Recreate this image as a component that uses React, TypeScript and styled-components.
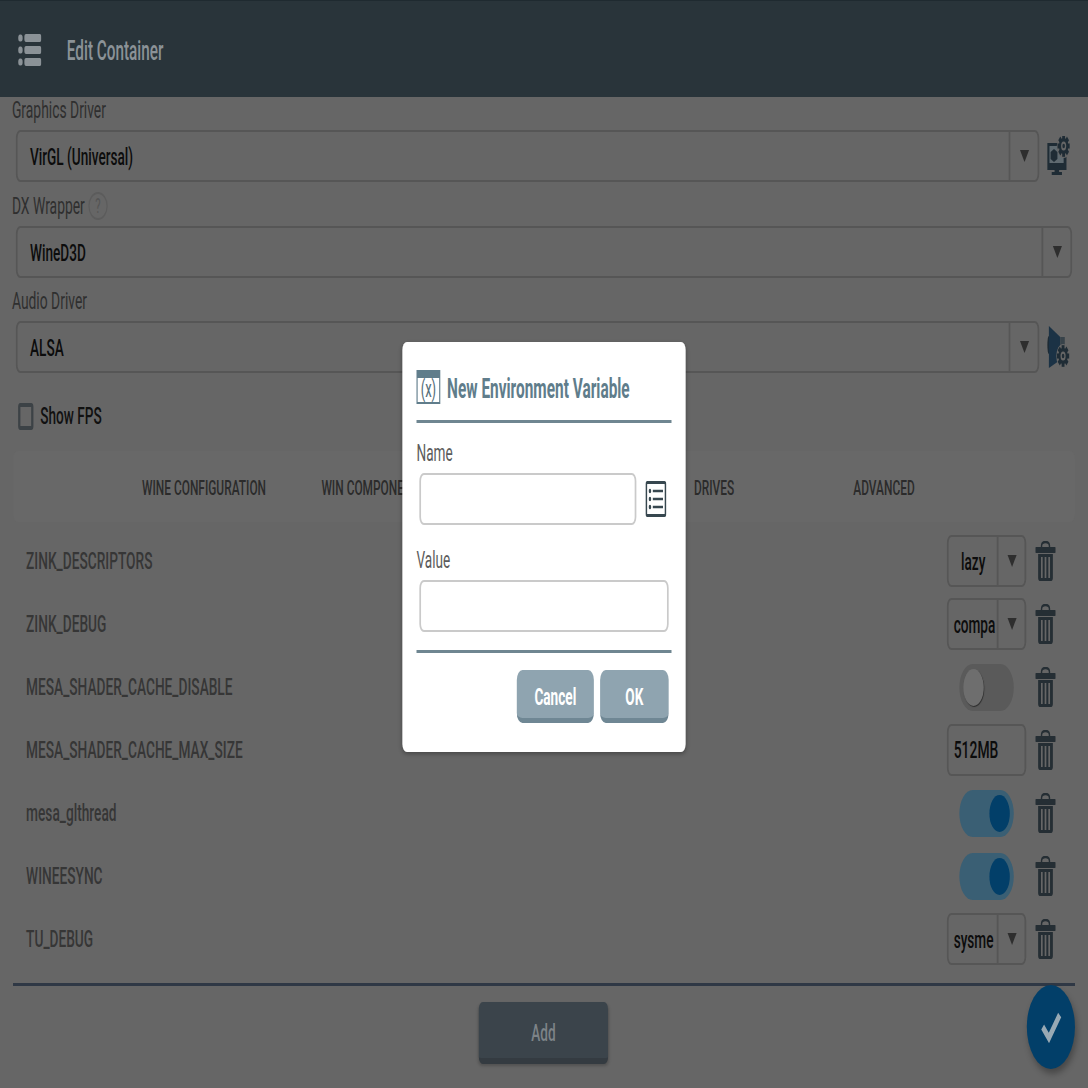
import React from "react";
import styled, { createGlobalStyle } from "styled-components";

const Global = createGlobalStyle`
  html, body { margin: 0; padding: 0; background: #666666; overflow: hidden; }
  #root { width: 1088px; height: 1088px; overflow: hidden; }
  * { box-sizing: border-box; }
`;

/* The reference is a 1920 wide tablet screen squeezed horizontally into 1088px. */
const Screen = styled.div`
  position: relative;
  width: 1920px;
  height: 1088px;
  transform: scaleX(0.56667);
  transform-origin: 0 0;
  background: #666666;
  font-family: Roboto, "Liberation Sans", sans-serif;
  overflow: hidden;
`;

const Header = styled.header`
  height: 97px;
  background: #29343a;
  border-top: 1px solid #1f2a30;
  display: flex;
  align-items: center;
  gap: 45px;
  padding: 1px 0 0 32px;
`;

const HeaderTitle = styled.h1`
  margin: 2px 0 0;
  font-size: 27px;
  font-weight: 500;
  color: #8b9297;
`;

const Form = styled.main`
  padding: 0 23px 0 21px;
  display: flex;
  flex-direction: column;
`;

const Field = styled.section`
  height: 95.5px;
`;

const FieldLabel = styled.div`
  height: 26px;
  line-height: 26px;
  margin-bottom: 7px;
  font-size: 24.5px;
  color: #2f2f2f;
  display: flex;
  align-items: center;
  gap: 6px;
`;

const HelpMark = styled.span`
  width: 34px;
  height: 28px;
  border: 2px solid #5c5c5c;
  border-radius: 50%;
  color: #545454;
  font-size: 20px;
  display: flex;
  align-items: center;
  justify-content: center;
`;

const SelectRow = styled.div`
  display: flex;
  align-items: center;
  gap: 14px;
  padding-right: 9px;
`;

const Select = styled.div<{ $full?: boolean }>`
  flex: 1;
  height: 52px;
  margin-left: 7px;
  margin-right: ${(p) => (p.$full ? "-4px" : "0")};
  border-style: solid;
  border-color: #565656;
  border-width: 2px 3px;
  border-radius: 8px;
  display: flex;
  align-items: stretch;
  font-size: 24px;
  font-weight: 500;
  color: #0c0c0c;
`;

const SelectValue = styled.div`
  flex: 1;
  min-width: 0;
  padding-left: 22px;
  line-height: 50px;
`;

const SelectArrow = styled.div<{ $w: number }>`
  width: ${(p) => p.$w}px;
  border-left: 3px solid #565656;
  display: flex;
  align-items: center;
  justify-content: center;
  flex: none;
`;

const Triangle = styled.span`
  width: 0;
  height: 0;
  margin-left: 2px;
  border-left: 8px solid transparent;
  border-right: 8px solid transparent;
  border-top: 12px solid #2e2e2e;
`;

const CheckRow = styled.label`
  margin-top: 18.5px;
  margin-left: 11px;
  height: 28px;
  display: flex;
  align-items: center;
  gap: 12px;
  font-size: 24px;
  font-weight: 500;
  color: #111;
`;

const CheckBox = styled.span`
  width: 27px;
  height: 27px;
  border: 4px solid #3c4246;
  border-radius: 4px;
`;

const Tabs = styled.nav`
  margin: 21px 0 0 2px;
  height: 71px;
  background: #686868;
  border-radius: 8px;
  display: flex;
  justify-content: center;
  align-items: center;
`;

const Tab = styled.div`
  width: 300px;
  padding-top: 2px;
  text-align: center;
  font-size: 21px;
  font-weight: 500;
  color: #2b2b2b;
  white-space: nowrap;
`;

const Rows = styled.div`
  margin-top: 7.5px;
`;

const Row = styled.div`
  height: 63px;
  display: flex;
  align-items: center;
  padding: 0 34px 0 25px;
`;

const RowName = styled.div`
  flex: 1;
  font-size: 24.2px;
  font-weight: 500;
  color: #363636;
`;

const ControlSlot = styled.div`
  width: 140px;
  display: flex;
  justify-content: center;
  margin-right: 16px;
`;

const SmallSelect = styled.div`
  width: 140px;
  height: 52px;
  border-style: solid;
  border-color: #565656;
  border-width: 2px 3px;
  border-radius: 8px;
  display: flex;
  align-items: stretch;
  font-size: 24px;
  font-weight: 500;
  color: #0c0c0c;
`;

const SmallValue = styled.div<{ $inset: number }>`
  flex: 1;
  min-width: 0;
  white-space: nowrap;
  padding-left: ${(p) => p.$inset}px;
  line-height: 50px;
`;

const TextBox = styled.div`
  width: 140px;
  height: 52px;
  border-style: solid;
  border-color: #565656;
  border-width: 2px 3px;
  border-radius: 8px;
  padding-left: 9px;
  line-height: 48px;
  font-size: 24.5px;
  font-weight: 500;
  color: #0c0c0c;
`;

const Track = styled.div<{ $on?: boolean }>`
  width: 96px;
  height: 47px;
  border-radius: 24px;
  padding: 5px 7px;
  background: ${(p) => (p.$on ? "#3a5f74" : "#5a5a5a")};
  display: flex;
  justify-content: ${(p) => (p.$on ? "flex-end" : "flex-start")};
`;

const Knob = styled.div<{ $on?: boolean }>`
  width: 36px;
  height: 37px;
  border-radius: 50%;
  background: ${(p) => (p.$on ? "#023f69" : "#6e6e6e")};
  box-shadow: ${(p) => (p.$on ? "none" : "1px 1px 1px #2e2e2e")};
`;

const Rule = styled.hr`
  margin: 12px 0 0 2px;
  border: none;
  height: 3px;
  background: #2f3845;
`;

const AddWrap = styled.div`
  margin-top: 16px;
  display: flex;
  justify-content: center;
`;

const AddButton = styled.button`
  width: 228px;
  height: 62px;
  background: #3b444b;
  border: none;
  border-bottom: 6px solid #343b41;
  border-radius: 7px;
  font: 500 24px Roboto, sans-serif;
  color: #7d8388;
  padding: 7px 0 0;
  box-shadow: 0 2px 4px rgba(0, 0, 0, 0.2);
`;

const Fab = styled.button`
  position: absolute;
  left: 1812px;
  top: 985px;
  width: 85px;
  height: 84px;
  border: none;
  border-radius: 50%;
  background: #023f69;
  box-shadow: 3px 5px 8px rgba(0, 0, 0, 0.3);
  display: flex;
  align-items: center;
  justify-content: center;
  padding: 0;
`;

const Backdrop = styled.div`
  position: absolute;
  inset: 0;
  display: flex;
  align-items: center;
  justify-content: center;
  padding-top: 6px;
`;

const Dialog = styled.div`
  width: 500px;
  background: #ffffff;
  border-radius: 8px;
  padding: 28px 25px 29px;
  box-shadow: 0 2px 6px rgba(0, 0, 0, 0.3);
`;

const DialogTitle = styled.div`
  height: 34px;
  display: flex;
  align-items: center;
  gap: 12px;
  font-size: 27.2px;
  font-weight: 700;
  color: #607d8b;
  white-space: nowrap;
`;

const TitleText = styled.span`
  padding-top: 4px;
`;

const VarIcon = styled.div`
  width: 42px;
  height: 34px;
  border: 2px solid #607d8b;
  border-top-width: 8px;
  display: flex;
  align-items: center;
  justify-content: center;
  font-size: 23px;
  line-height: 24px;
  font-weight: 400;
  color: #546e7a;
`;

const DialogRule = styled.hr<{ $top: number }>`
  margin: ${(p) => p.$top}px 0 0;
  border: none;
  height: 3px;
  background: #6f8691;
`;

const DialogLabel = styled.div<{ $top: number }>`
  margin-top: ${(p) => p.$top}px;
  margin-bottom: 7px;
  height: 26px;
  line-height: 27px;
  font-size: 24px;
  color: #5c5c5c;
`;

const NameRow = styled.div`
  display: flex;
  align-items: center;
  gap: 16px;
  padding: 0 9px 0 5px;
`;

const TextInput = styled.input`
  display: block;
  flex: 1;
  min-width: 0;
  height: 52px;
  border-style: solid;
  border-color: #cacaca;
  border-width: 2px 3px;
  border-radius: 8px;
  background: #fff;
  outline: none;
`;

const ValueInput = styled(TextInput)`
  width: 440px;
  margin-left: 5px;
`;

const Actions = styled.div`
  margin-top: 17px;
  padding-right: 5px;
  display: flex;
  justify-content: flex-end;
  gap: 11px;
`;

const DialogButton = styled.button<{ $w: number }>`
  width: ${(p) => p.$w}px;
  height: 53px;
  background: #8fa4b0;
  border: none;
  border-bottom: 5px solid #6f8794;
  border-radius: 10px;
  font: 700 24px Roboto, sans-serif;
  color: #ffffff;
  padding: 5px 0 0;
`;

const MenuIcon = () => (
  <svg width="41" height="32" viewBox="0 0 41 32" fill="#8b9297">
    <rect x="0" y="0.5" width="8" height="7" rx="3.5" />
    <rect x="11" y="0" width="30" height="8" rx="3" />
    <rect x="0" y="12.5" width="8" height="7" rx="3.5" />
    <rect x="11" y="12" width="30" height="8" rx="3" />
    <rect x="0" y="24.5" width="8" height="7" rx="3.5" />
    <rect x="11" y="24" width="30" height="8" rx="3" />
  </svg>
);

const Gear = ({ x, y, r, fill }: { x: number; y: number; r: number; fill: string }) => (
  <g>
    {[0, 45, 90, 135].map((a) => (
      <rect
        key={a}
        x={x - r * 0.28}
        y={y - r * 1.2}
        width={r * 0.56}
        height={r * 2.4}
        fill={fill}
        transform={`rotate(${a} ${x} ${y})`}
      />
    ))}
    <circle cx={x} cy={y} r={r * 0.9} fill={fill} />
    <circle cx={x} cy={y} r={r * 0.5} fill="#666666" />
    <circle cx={x} cy={y} r={r * 0.25} fill={fill} />
  </g>
);

const GraphicsIcon = () => (
  <svg width="40" height="40" viewBox="0 0 40 40">
    <path d="M0 7h24v9h10v18H0z" fill="#1f2c35" />
    <rect x="4" y="10" width="25" height="17" fill="#5f6a70" />
    <path d="M12 13l6 3v7l-6 3-6-3v-7z" fill="#1f2c35" />
    <rect x="13" y="33" width="8" height="4" fill="#1f2c35" />
    <rect x="8" y="36" width="18" height="3" fill="#1f2c35" />
    <circle cx="29" cy="10" r="12" fill="#666666" />
    <Gear x={29} y={10} r={9} fill="#1f2c35" />
  </svg>
);

const AudioIcon = () => (
  <svg width="40" height="42" viewBox="0 0 40 42">
    <ellipse cx="3" cy="19" rx="3" ry="9" fill="#1d2a33" />
    <path d="M3 0l20 11v23L3 42z" fill="#1b3245" />
    <path d="M23 11h8v12h-8z" fill="#38434a" />
    <circle cx="28" cy="30" r="12" fill="#666666" />
    <Gear x={28} y={30} r={9} fill="#1f2c35" />
  </svg>
);

const TrashIcon = () => (
  <svg width="36" height="40" viewBox="0 0 36 40" fill="none">
    <path d="M11 7V5c0-2.5 3-4 7-4s7 1.500 7 4v2" stroke="#252e34" strokeWidth="2.500" />
    <rect x="0" y="6" width="36" height="6" rx="1" fill="#252e34" />
    <path
      d="M5 13h26v24c0 1.500-1 3-3 3H8c-2 0-3-1.500-3-3zM10 16v21h3V16zm6.500 0v21h3V16zm6.500 0v21h3V16z"
      fill="#252e34"
      fillRule="evenodd"
    />
  </svg>
);

const ListIcon = () => (
  <svg width="37" height="36" viewBox="0 0 37 36" fill="none">
    <rect x="1.500" y="1.500" width="34" height="33" rx="2" stroke="#37474f" strokeWidth="3" />
    <circle cx="8" cy="10" r="2.200" fill="#37474f" />
    <circle cx="8" cy="18" r="2.200" fill="#37474f" />
    <circle cx="8" cy="26" r="2.200" fill="#37474f" />
    <path d="M13 10h18M13 18h18M13 26h18" stroke="#37474f" strokeWidth="2.500" />
  </svg>
);

const CheckIcon = () => (
  <svg width="38" height="32" viewBox="0 0 38 32" fill="none">
    <path d="M4 16l11 11L34 4" stroke="#98a9b4" strokeWidth="7" />
  </svg>
);

const Toggle = ({ on }: { on?: boolean }) => (
  <Track $on={on}>
    <Knob $on={on} />
  </Track>
);

const Dropdown = ({ value, inset }: { value: string; inset: number }) => (
  <SmallSelect>
    <SmallValue $inset={inset}>{value}</SmallValue>
    <SelectArrow $w={49}>
      <Triangle />
    </SelectArrow>
  </SmallSelect>
);

type EnvRow = { name: string; control: React.ReactNode };

const envRows: EnvRow[] = [
  { name: "ZINK_DESCRIPTORS", control: <Dropdown value="lazy" inset={22} /> },
  { name: "ZINK_DEBUG", control: <Dropdown value="compa" inset={9} /> },
  { name: "MESA_SHADER_CACHE_DISABLE", control: <Toggle /> },
  { name: "MESA_SHADER_CACHE_MAX_SIZE", control: <TextBox>512MB</TextBox> },
  { name: "mesa_glthread", control: <Toggle on /> },
  { name: "WINEESYNC", control: <Toggle on /> },
  { name: "TU_DEBUG", control: <Dropdown value="sysme" inset={9} /> },
];

const tabs = ["WINE CONFIGURATION", "WIN COMPONENTS", "ENVIRONMENT VARIABLES", "DRIVES", "ADVANCED"];

export default function App() {
  return (
    <Screen>
      <Global />
      <Header>
        <MenuIcon />
        <HeaderTitle>Edit Container</HeaderTitle>
      </Header>
      <Form>
        <Field>
          <FieldLabel>Graphics Driver</FieldLabel>
          <SelectRow>
            <Select>
              <SelectValue>VirGL (Universal)</SelectValue>
              <SelectArrow $w={51}>
                <Triangle />
              </SelectArrow>
            </Select>
            <GraphicsIcon />
          </SelectRow>
        </Field>
        <Field>
          <FieldLabel>
            DX Wrapper <HelpMark>?</HelpMark>
          </FieldLabel>
          <SelectRow>
            <Select $full>
              <SelectValue>WineD3D</SelectValue>
              <SelectArrow $w={51}>
                <Triangle />
              </SelectArrow>
            </Select>
          </SelectRow>
        </Field>
        <Field>
          <FieldLabel>Audio Driver</FieldLabel>
          <SelectRow>
            <Select>
              <SelectValue>ALSA</SelectValue>
              <SelectArrow $w={51}>
                <Triangle />
              </SelectArrow>
            </Select>
            <AudioIcon />
          </SelectRow>
        </Field>
        <CheckRow>
          <CheckBox />
          Show FPS
        </CheckRow>
        <Tabs>
          {tabs.map((t) => (
            <Tab key={t}>{t}</Tab>
          ))}
        </Tabs>
        <Rows>
          {envRows.map((r) => (
            <Row key={r.name}>
              <RowName>{r.name}</RowName>
              <ControlSlot>{r.control}</ControlSlot>
              <TrashIcon />
            </Row>
          ))}
        </Rows>
        <Rule />
        <AddWrap>
          <AddButton>Add</AddButton>
        </AddWrap>
      </Form>
      <Fab aria-label="Confirm">
        <CheckIcon />
      </Fab>
      <Backdrop>
        <Dialog>
          <DialogTitle>
            <VarIcon>(x)</VarIcon>
            <TitleText>New Environment Variable</TitleText>
          </DialogTitle>
          <DialogRule $top={16} />
          <DialogLabel $top={17}>Name</DialogLabel>
          <NameRow>
            <TextInput />
            <ListIcon />
          </NameRow>
          <DialogLabel $top={22}>Value</DialogLabel>
          <ValueInput />
          <DialogRule $top={18} />
          <Actions>
            <DialogButton $w={136}>Cancel</DialogButton>
            <DialogButton $w={121}>OK</DialogButton>
          </Actions>
        </Dialog>
      </Backdrop>
    </Screen>
  );
}
